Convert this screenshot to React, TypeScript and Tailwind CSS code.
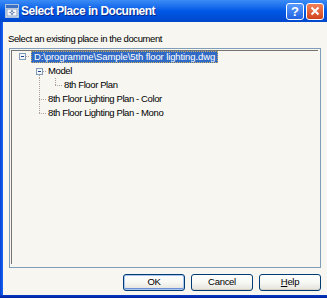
import React from "react";

const font = "font-['Liberation_Sans',Arial,sans-serif]";
const dot = "#b0a0a0";

function TitleIcon() {
  return (
    <svg width="14" height="14" viewBox="0 0 14 14" className="shrink-0">
      <rect x="0.5" y="0.5" width="13" height="13" fill="#dfe8f4" stroke="#a9c2e0" />
      <rect x="1" y="1" width="12" height="3" fill="#3a6fc4" />
      <rect x="2" y="5" width="10" height="7" fill="#f4f6fa" stroke="#7a94bb" strokeWidth="0.8" />
      <path d="M7 6v5M4.5 8.5h5" stroke="#4a6fa8" strokeWidth="1.2" />
      <circle cx="7" cy="8.5" r="1.2" fill="#fff" stroke="#3b5d96" strokeWidth="0.6" />
    </svg>
  );
}

function Box({ x, y }: { x: number; y: number }) {
  return (
    <g>
      <rect x={x + 0.5} y={y + 0.5} width="6" height="6" fill="#f4f6f8" stroke="#7f9db9" shapeRendering="crispEdges" />
      <path d={`M${x + 2} ${y + 3.5}h3`} stroke="#1f3f8f" strokeWidth="1" shapeRendering="crispEdges" />
    </g>
  );
}

function VLine({ x, y1, y2 }: { x: number; y1: number; y2: number }) {
  return <line x1={x + 0.5} x2={x + 0.5} y1={y1} y2={y2} stroke={dot} strokeDasharray="1 1" shapeRendering="crispEdges" />;
}
function HLine({ y, x1, x2 }: { y: number; x1: number; x2: number }) {
  return <line y1={y + 0.5} y2={y + 0.5} x1={x1} x2={x2} stroke={dot} strokeDasharray="1 1" shapeRendering="crispEdges" />;
}

function Row({ gutter, children, lines }: { gutter: number; children: React.ReactNode; lines: React.ReactNode }) {
  return (
    <div className="flex h-[14px] items-center">
      <svg width={gutter} height="14" viewBox={`0 0 ${gutter} 14`} className="shrink-0">
        {lines}
      </svg>
      {children}
    </div>
  );
}

function Btn({ children, def }: { children: React.ReactNode; def?: boolean }) {
  return (
    <div
      className={`w-[62px] h-[17px] rounded-[3px] border border-[#003c74] bg-gradient-to-b from-[#ffffff] via-[#f7f7f4] to-[#e3e2da] flex items-center justify-center text-[9.5px] tracking-[-0.3px] text-black ${
        def ? "shadow-[inset_0_0_0_1px_#a9c6ef,inset_0_-1px_0_1px_#6a90d8]" : "shadow-[inset_0_-1px_0_0_#d6d0c5]"
      }`}
    >
      {children}
    </div>
  );
}

export default function App() {
  return (
    <div className={`w-[327px] h-[298px] overflow-hidden flex flex-col bg-[#f7f6f0] ${font}`}>
      {/* title bar */}
      <div className="h-[22px] shrink-0 flex items-center pl-[5px] pr-[3px] bg-gradient-to-b from-[#3b8cf6] via-[#0058e6] to-[#0047cc]">
        <TitleIcon />
        <div className="ml-[2px] text-white font-bold text-[12px] tracking-[-0.5px] leading-none [text-shadow:1px_1px_0_#0a2a8a]">
          Select Place in Document
        </div>
        <div className="flex-1" />
        <div className="w-[18px] h-[17px] rounded-[3px] border border-white bg-gradient-to-b from-[#5a9cff] to-[#2362e0] flex items-center justify-center text-white font-bold text-[13px] leading-none">
          ?
        </div>
        <div className="ml-[2px] w-[18px] h-[17px] rounded-[3px] border border-white bg-gradient-to-b from-[#f0825a] to-[#d2421a] flex items-center justify-center">
          <svg width="10" height="10" viewBox="0 0 10 10">
            <path d="M1.5 1.5l7 7M8.5 1.5l-7 7" stroke="#fff" strokeWidth="2" />
          </svg>
        </div>
      </div>
      {/* client */}
      <div className="flex-1 flex">
        <div className="w-[3px] bg-gradient-to-r from-[#0a3fd0] to-[#1766f5]" />
        <div className="flex-1 flex flex-col">
          <div className="mt-[11px] ml-[5px] text-[9.5px] leading-[12px] tracking-[-0.4px] text-black">
            Select an existing place in the document
          </div>
          <div className="mt-[3px] ml-[6px] w-[312px] h-[220px] border border-[#7f9db9] pt-px pl-px">
            <div className="w-[307px] h-[214px] border-t border-l border-[#747474]">
              <div className="-mt-px text-[9.5px] tracking-[-0.4px] text-black">
                <Row
                  gutter={19}
                  lines={
                    <>
                      <Box x={7} y={3} />
                      <HLine y={6} x1={14} x2={18} />
                    </>
                  }
                >
                  <div className="h-[12px] px-[2px] flex items-center bg-[#316ac5] text-white border border-dotted border-[#c8b060] leading-none tracking-[-0.1px]">
                    D:\programme\Sample\5th floor lighting.dwg
                  </div>
                </Row>
                <Row
                  gutter={36}
                  lines={
                    <>
                      <Box x={24} y={4} />
                      <HLine y={7} x1={31} x2={35} />
                      <VLine x={27} y1={11} y2={14} />
                    </>
                  }
                >
                  <span className="leading-none">Model</span>
                </Row>
                <Row
                  gutter={52}
                  lines={
                    <>
                      <VLine x={27} y1={0} y2={14} />
                      <VLine x={43} y1={0} y2={7} />
                      <HLine y={7} x1={43} x2={50} />
                    </>
                  }
                >
                  <span className="leading-none">8th Floor Plan</span>
                </Row>
                <Row
                  gutter={36}
                  lines={
                    <>
                      <VLine x={27} y1={0} y2={14} />
                      <HLine y={7} x1={27} x2={35} />
                    </>
                  }
                >
                  <span className="leading-none">8th Floor Lighting Plan - Color</span>
                </Row>
                <Row
                  gutter={36}
                  lines={
                    <>
                      <VLine x={27} y1={0} y2={7} />
                      <HLine y={7} x1={27} x2={35} />
                    </>
                  }
                >
                  <span className="leading-none">8th Floor Lighting Plan - Mono</span>
                </Row>
              </div>
            </div>
          </div>
          <div className="mt-[6px] pr-[6px] flex justify-end gap-[6px]">
            <Btn def>OK</Btn>
            <Btn>Cancel</Btn>
            <Btn>
              <span>
                <span className="underline">H</span>elp
              </span>
            </Btn>
          </div>
        </div>
      </div>
      <div className="h-[3px] shrink-0 bg-gradient-to-b from-[#0a3cc8] to-[#001f9a]" />
    </div>
  );
}
